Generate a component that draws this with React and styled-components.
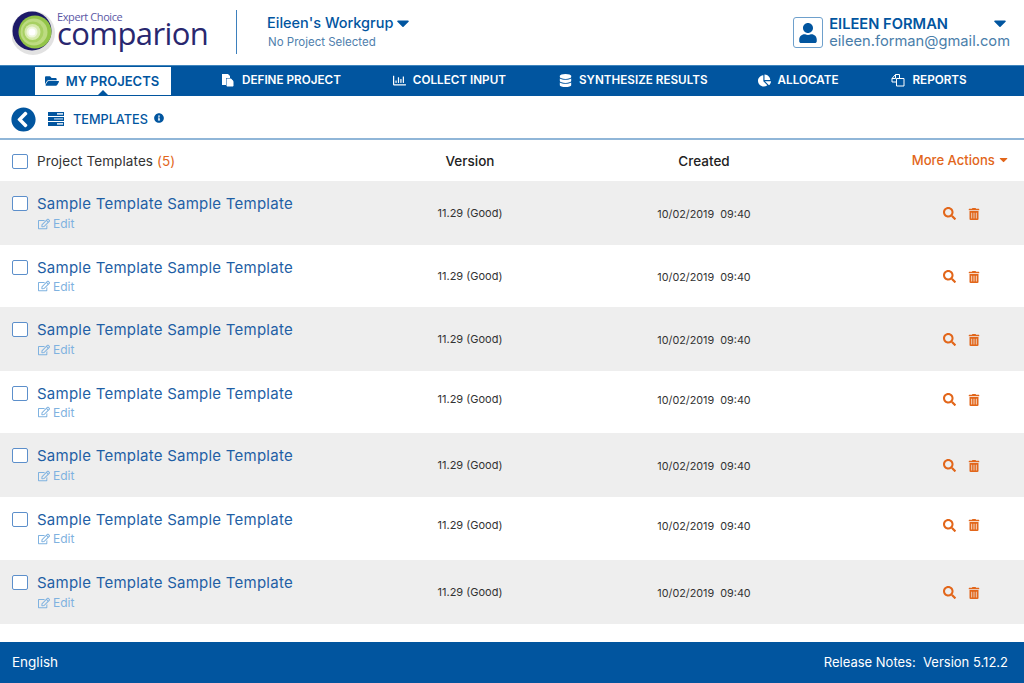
import React from 'react';
import styled, { createGlobalStyle } from 'styled-components';
import {
  FaFolderOpen, FaRegChartBar, FaDatabase, FaChartPie, FaSearch,
  FaTrashAlt, FaRegEdit, FaInfoCircle, FaChevronCircleLeft, FaUser, FaCaretDown,
} from 'react-icons/fa';

const BLUE = '#01559f';
const ORANGE = '#e2661a';

const Global = createGlobalStyle`
  html, body { margin: 0; padding: 0; background: #fff; }
  body { font-family: "Inter", "Open Sans", "Liberation Sans", sans-serif; color: #333; }
`;

const Page = styled.div`
  width: 1024px;
  height: 683px;
  display: flex;
  flex-direction: column;
  overflow: hidden;
`;

const Header = styled.header`
  height: 65px;
  display: flex;
  align-items: center;
  padding: 0 14px 0 12px;
`;

const Logo = styled.div`
  width: 200px;
  height: 50px;
  display: flex;
  align-items: center;
  flex: none;
`;

const LogoText = styled.div`
  margin-left: -1px;
  padding-bottom: 12px;
  display: flex;
  flex-direction: column;
`;

const LogoTop = styled.span`
  font: 11px/12px "Open Sans", sans-serif;
  color: #5a57a5;
  letter-spacing: -0.4px;
`;

const LogoName = styled.span`
  font: 31px/20px "Open Sans", sans-serif;
  letter-spacing: -0.6px;
  color: #29276f;
`;

const Divider = styled.div`
  width: 1px;
  height: 44px;
  margin: -2px 0 0 24px;
  background: #3d80bd;
`;

const Workgroup = styled.div`
  margin: -3px 0 0 30px;
  display: flex;
  flex-direction: column;
  gap: 3px;
`;

const WorkgroupName = styled.div`
  display: flex;
  align-items: center;
  font-size: 14.5px;
  font-weight: 500;
  line-height: 16px;
  color: ${BLUE};
  svg { font-size: 20px; margin-top: -1px; }
`;

const NoProject = styled.div`
  font-size: 11.5px;
  line-height: 13px;
  margin-left: 1px;
  color: #4f80ad;
`;

const User = styled.div`
  margin-left: auto;
  display: flex;
  align-items: center;
  gap: 6px;
`;

const Avatar = styled.div`
  width: 28px;
  height: 29px;
  border: 1px solid #6ea0cc;
  border-radius: 3px;
  display: flex;
  align-items: center;
  justify-content: center;
  color: ${BLUE};
  font-size: 20px;
`;

const UserText = styled.div`
  display: flex;
  flex-direction: column;
`;

const UserTop = styled.div`
  display: flex;
  justify-content: space-between;
  align-items: center;
  font-size: 14.7px;
  line-height: 18px;
  font-weight: 600;
  color: ${BLUE};
  svg { font-size: 20px; margin: -3px 0 0; }
`;

const Email = styled.div`
  font-size: 14.7px;
  line-height: 17px;
  color: #4a7eaa;
`;

const Nav = styled.nav`
  height: 30px;
  border-top: 1px solid #3f85bd;
  background: ${BLUE};
  display: flex;
  padding-left: 34px;
`;

const NavItem = styled.div`
  position: relative;
  height: 100%;
  box-sizing: border-box;
  display: flex;
  align-items: center;
  justify-content: center;
  gap: 7px;
  padding-bottom: 2px;
  margin-left: ${p => p.$ml}px;
  font-size: 11.7px;
  font-weight: 600;
  color: #fff;
  svg { font-size: 13px; }
  ${p => p.$active && `
    width: 138px;
    padding: 0 2px 0 0;
    border: 1px solid ${BLUE};
    background: #fff;
    color: ${BLUE};
    font-size: 13px;
    svg { font-size: 14px; }
    &::after {
      content: "";
      position: absolute;
      left: 50%;
      bottom: 0;
      margin-left: -5px;
      border: 5px solid transparent;
      border-top: 0;
      border-bottom-color: ${BLUE};
    }
  `}
`;

const SubHeader = styled.div`
  height: 44px;
  box-sizing: border-box;
  border-bottom: 2px solid #90b6d8;
  display: flex;
  align-items: center;
  padding: 4px 0 0 11px;
  color: ${BLUE};
`;

const BackIcon = styled(FaChevronCircleLeft)`
  font-size: 25px;
`;

const TitleText = styled.span`
  font-size: 12.7px;
  font-weight: 500;
  margin-left: 9px;
`;

const Info = styled(FaInfoCircle)`
  font-size: 10px;
  margin-left: 6px;
  margin-top: -3px;
`;

const Columns = `
  display: grid;
  grid-template-columns: 400px 140px 328px 1fr;
`;

const ListHead = styled.div`
  ${Columns}
  height: 41px;
  align-items: center;
  font-size: 13.5px;
  padding-top: 1px;
  box-sizing: border-box;
`;

const NameCell = styled.div`
  display: flex;
  align-items: center;
  gap: 9px;
  padding-left: 12px;
  letter-spacing: 0.1px;
`;

const Box = styled.span`
  width: 14px;
  height: 13px;
  flex: none;
  border: 1px solid #5c8fcb;
  border-radius: 2px;
  background: #fff;
`;

const Count = styled.span`
  color: ${ORANGE};
`;

const HeadLabel = styled.div`
  text-align: center;
  font-weight: 500;
  color: #222;
`;

const MoreActions = styled.div`
  display: flex;
  align-items: center;
  justify-content: flex-end;
  gap: 2px;
  padding-right: 14px;
  font-size: 13.1px;
  font-weight: 500;
  color: ${ORANGE};
  margin-top: -2px;
`;

const Row = styled.div`
  ${Columns}
  height: ${p => p.$h}px;
  background: ${p => (p.$shaded ? '#eeeeee' : '#fff')};
  align-items: center;
`;

const RowName = styled.div`
  display: flex;
  flex-direction: column;
  padding-left: 12px;
  gap: ${p => (p.$shaded ? 5 : 4)}px;
  margin-top: -1px;
`;

const TitleLine = styled.div`
  display: flex;
  align-items: center;
  gap: 9px;
  font-size: 15px;
  line-height: 17px;
  letter-spacing: 0.24px;
  color: #1f5fa5;
`;

const EditLink = styled.div`
  display: flex;
  align-items: center;
  gap: 3px;
  margin-left: 26px;
  font-size: 12px;
  line-height: 13px;
  color: #7fb2e0;
  svg { font-size: 12px; }
`;

const Version = styled.div`
  text-align: center;
  font-size: 11px;
  color: #333;
  margin-top: ${p => -2 * p.$lift}px;
`;

const DateCell = styled.div`
  text-align: center;
  font-size: 10.8px;
  color: #333;
  padding-top: 3px;
  white-space: pre;
  margin-top: ${p => -2 * p.$lift}px;
`;

const Actions = styled.div`
  display: flex;
  align-items: center;
  gap: 12px;
  padding-left: 75px;
  padding-top: 1px;
  color: ${ORANGE};
  font-size: 13px;
  margin-top: ${p => -2 * p.$lift}px;
`;

const Trash = styled(FaTrashAlt)`
  font-size: 12px;
`;

const Footer = styled.footer`
  height: 41px;
  margin-top: auto;
  background: ${BLUE};
  color: #fff;
  display: flex;
  align-items: center;
  justify-content: space-between;
  padding: 0 16px 2px 12px;
  box-sizing: border-box;
  font-size: 13px;
  white-space: pre;
`;

const FooterLang = styled.span`
  font-size: 13.5px;
`;

const LogoMark = () => (
  <svg width="46" height="50" viewBox="0 0 46 50" style={{ flex: 'none' }}>
    <circle cx="21" cy="25" r="22" fill="#e2e2e2" />
    <circle cx="20" cy="23" r="19.5" fill="#1d1a68" />
    <circle cx="23" cy="24" r="16.5" fill="#93c548" />
    <circle cx="22" cy="24" r="13.5" fill="#bddb82" />
    <circle cx="21" cy="24" r="10.5" fill="#a8d063" />
    <circle cx="20.5" cy="24" r="8" fill="#d6e9ad" />
    <circle cx="20" cy="24" r="5.5" fill="#eef6dd" />
    <circle cx="20" cy="24" r="3.5" fill="#fff" />
  </svg>
);

const TemplatesIcon = () => (
  <svg width="16" height="14" viewBox="0 0 16 14" style={{ marginLeft: 12 }}>
    <rect x="0" y="0" width="16" height="4" fill={BLUE} />
    <rect x="0" y="5" width="16" height="4" fill={BLUE} />
    <rect x="0" y="10" width="16" height="4" fill={BLUE} />
    <rect x="9" y="1.2" width="6" height="1.4" fill="#fff" />
    <rect x="6" y="6.2" width="9" height="1.4" fill="#9cc3e4" />
    <rect x="9" y="11.2" width="6" height="1.4" fill="#fff" />
  </svg>
);

const DefineIcon = () => (
  <svg width="14" height="14" viewBox="0 0 14 14">
    <path d="M1 1h6l2 2v9H1z" fill="#fff" />
    <path d="M5.5 5.5h4.5l2.5 2.5v5.5h-7z" fill="#fff" stroke={BLUE} strokeWidth="1" />
    <path d="M6 6h3.8l2.2 2.2V13H6z" fill="none" stroke="#fff" strokeWidth="1" />
  </svg>
);

const ReportsIcon = () => (
  <svg width="14" height="14" viewBox="0 0 14 14" fill="none" stroke="#fff" strokeWidth="1">
    <path d="M1 5.5L4.5 1.5H8.5V9H1z" />
    <path d="M5.5 5.5H13V13H5.5z" fill={BLUE} />
    <path d="M1 5.5H4.5V1.5" />
  </svg>
);

const navItems = [
  { label: 'MY PROJECTS', icon: FaFolderOpen, ml: 0, active: true },
  { label: 'DEFINE PROJECT', icon: DefineIcon, ml: 49 },
  { label: 'COLLECT INPUT', icon: FaRegChartBar, ml: 52 },
  { label: 'SYNTHESIZE RESULTS', icon: FaDatabase, ml: 53 },
  { label: 'ALLOCATE', icon: FaChartPie, ml: 50 },
  { label: 'REPORTS', icon: ReportsIcon, ml: 53 },
];

const rows = [
  { h: 64, lift: 0 },
  { h: 62, lift: 0 },
  { h: 64, lift: 0 },
  { h: 62, lift: 3 },
  { h: 64, lift: 0 },
  { h: 63, lift: 4 },
  { h: 64, lift: 0 },
];

const App = () => (
  <Page>
    <Global />
    <Header>
      <Logo>
        <LogoMark />
        <LogoText>
          <LogoTop>Expert Choice</LogoTop>
          <LogoName>comparion</LogoName>
        </LogoText>
      </Logo>
      <Divider />
      <Workgroup>
        <WorkgroupName>Eileen's Workgrup <FaCaretDown /></WorkgroupName>
        <NoProject>No Project Selected</NoProject>
      </Workgroup>
      <User>
        <Avatar><FaUser /></Avatar>
        <UserText>
          <UserTop>EILEEN FORMAN <FaCaretDown /></UserTop>
          <Email>eileen.forman@gmail.com</Email>
        </UserText>
      </User>
    </Header>
    <Nav>
      {navItems.map(({ label, icon: Icon, ml, active }) => (
        <NavItem key={label} $ml={ml} $active={active}><Icon />{label}</NavItem>
      ))}
    </Nav>
    <SubHeader>
      <BackIcon />
      <TemplatesIcon />
      <TitleText>TEMPLATES</TitleText>
      <Info />
    </SubHeader>
    <ListHead>
      <NameCell><Box /><span>Project Templates <Count>(5)</Count></span></NameCell>
      <HeadLabel>Version</HeadLabel>
      <HeadLabel>Created</HeadLabel>
      <MoreActions>More Actions <FaCaretDown /></MoreActions>
    </ListHead>
    {rows.map(({ h, lift }, i) => (
      <Row key={i} $h={h} $shaded={i % 2 === 0}>
        <RowName $shaded={i % 2 === 0}>
          <TitleLine><Box />Sample Template Sample Template</TitleLine>
          <EditLink><FaRegEdit /> Edit</EditLink>
        </RowName>
        <Version $lift={lift}>11.29 (Good)</Version>
        <DateCell $lift={lift}>10/02/2019  09:40</DateCell>
        <Actions $lift={lift}><FaSearch /><Trash /></Actions>
      </Row>
    ))}
    <Footer>
      <FooterLang>English</FooterLang>
      <span>Release Notes:  Version 5.12.2</span>
    </Footer>
  </Page>
);

export default App;
